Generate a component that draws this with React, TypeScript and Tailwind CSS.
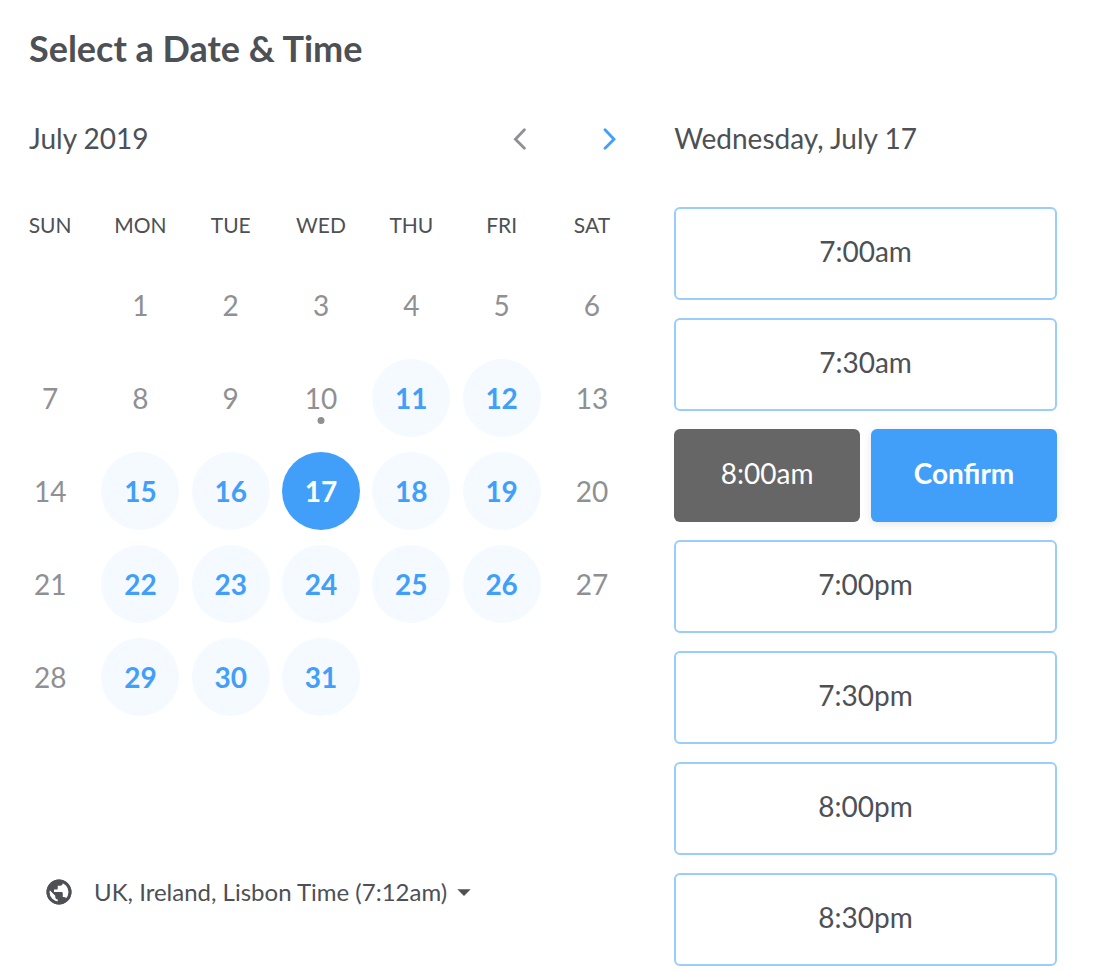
import React, { useState } from "react";
import { MdArrowDropDown } from "react-icons/md";

const WEEKDAYS = ["SUN", "MON", "TUE", "WED", "THU", "FRI", "SAT"];

// null = empty cell outside the month
const WEEKS: (number | null)[][] = [
  [null, 1, 2, 3, 4, 5, 6],
  [7, 8, 9, 10, 11, 12, 13],
  [14, 15, 16, 17, 18, 19, 20],
  [21, 22, 23, 24, 25, 26, 27],
  [28, 29, 30, 31, null, null, null],
];

const AVAILABLE = [11, 12, 15, 16, 17, 18, 19, 22, 23, 24, 25, 26, 29, 30, 31];
const TODAY = 10;

const TIMES = ["7:00am", "7:30am", "8:00am", "7:00pm", "7:30pm", "8:00pm", "8:30pm"];

// Globe with a slightly heavier rim
const GlobeIcon = () => (
  <svg viewBox="0 0 24 24" fill="currentColor" className="size-[30px]" aria-hidden="true">
    <path d="M12 2C6.48 2 2 6.48 2 12s4.48 10 10 10 10-4.48 10-10S17.52 2 12 2zm-1 17.93c-3.95-.49-7-3.85-7-7.93 0-.62.08-1.21.21-1.79L9 15v1c0 1.1.9 2 2 2v1.93zm6.9-2.54c-.26-.81-1-1.39-1.9-1.39h-1v-3c0-.55-.45-1-1-1H8v-2h2c.55 0 1-.45 1-1V7h2c1.1 0 2-.9 2-2v-.41c2.93 1.19 5 4.06 5 7.41 0 2.08-.8 3.97-2.1 5.39z" />
    <circle cx="12" cy="12" r="8.8" fill="none" stroke="currentColor" strokeWidth="2.4" />
  </svg>
);

interface DayProps {
  day: number;
  selected: boolean;
  onSelect: (day: number) => void;
}

const Day: React.FC<DayProps> = ({ day, selected, onSelect }) => {
  const available = AVAILABLE.includes(day);

  let style = "text-[#8f9094]";
  if (available) style = "bg-[#f4faff] font-bold text-[#419ff9]";
  if (selected) style = "bg-[#419ff9] font-bold text-white";

  return (
    <button
      type="button"
      disabled={!available}
      onClick={() => onSelect(day)}
      className={`relative mx-auto flex size-[78px] items-center justify-center rounded-full ${style}`}
    >
      {day}
      {day === TODAY && (
        <span className="absolute bottom-[13px] left-1/2 size-[7px] -translate-x-1/2 rounded-full bg-[#8f9094]" />
      )}
    </button>
  );
};

interface TimeSlotProps {
  time: string;
  selected: boolean;
  onSelect: (time: string) => void;
}

const TimeSlot: React.FC<TimeSlotProps> = ({ time, selected, onSelect }) => {
  if (selected) {
    return (
      <li className="flex gap-[11px]">
        <button type="button" className="h-[93px] flex-1 rounded-md bg-[#666666] pb-1.5 text-white">
          {time}
        </button>
        <button
          type="button"
          className="h-[93px] flex-1 rounded-md bg-[#419ff9] pb-1.5 font-bold text-white shadow-[0_2px_10px_rgba(0,0,0,0.1)]"
        >
          Confirm
        </button>
      </li>
    );
  }

  return (
    <li>
      <button
        type="button"
        onClick={() => onSelect(time)}
        className="h-[93px] w-full rounded-md border-2 border-[#9bcdfb] pb-1.5"
      >
        {time}
      </button>
    </li>
  );
};

const App: React.FC = () => {
  const [day, setDay] = useState(17);
  const [time, setTime] = useState("8:00am");

  const weekday = new Date(2019, 6, day).toLocaleDateString("en-US", { weekday: "long" });

  return (
    <main className="bg-white pt-[27px] pr-[43px] pl-[5px] font-['Lato',sans-serif] text-[28px] text-[#4d5055]">
      <h1 className="pl-6 text-4xl leading-[42px] font-bold">Select a Date &amp; Time</h1>

      <div className="mt-[49px] grid grid-cols-[53fr_32fr] gap-[35px]">
        <section>
          <div className="flex h-10 items-center pl-6">
            <h2 className="flex-1">July 2019</h2>
            <button type="button" aria-label="Previous month" className="flex w-[90px] justify-center text-[#8f9094]">
              <svg width="14" height="24" viewBox="0 0 14 24" fill="none" stroke="currentColor" strokeWidth="2.8" strokeLinecap="round">
                <path d="M11.4 3.8 2.4 13.2l9 9" />
              </svg>
            </button>
            <button type="button" aria-label="Next month" className="mr-[-16px] flex w-[90px] justify-center text-[#419ff9]">
              <svg width="14" height="24" viewBox="0 0 14 24" fill="none" stroke="currentColor" strokeWidth="2.8" strokeLinecap="round">
                <path d="M2 3.8 11 13.2l-9 9" />
              </svg>
            </button>
          </div>

          <div className="mt-[50px] min-h-[608px] pr-0.5">
            <table className="w-full table-fixed">
              <thead>
                <tr>
                  {WEEKDAYS.map((name) => (
                    <th key={name} scope="col" className="pb-4 text-[21px] leading-[34px] font-normal">
                      {name}
                    </th>
                  ))}
                </tr>
              </thead>
              <tbody>
                {WEEKS.map((week, i) => (
                  <tr key={i} className="h-[93px]">
                    {week.map((d, j) => (
                      <td key={j} className="p-0">
                        {d && <Day day={d} selected={d === day} onSelect={setDay} />}
                      </td>
                    ))}
                  </tr>
                ))}
              </tbody>
            </table>
          </div>

          <div className="mt-15 flex items-center pl-[39px]">
            <GlobeIcon />
            <div className="relative ml-5">
              <select
                aria-label="Time zone"
                className="block appearance-none bg-transparent pr-8 text-2xl leading-8"
              >
                <option>UK, Ireland, Lisbon Time (7:12am)</option>
              </select>
              <MdArrowDropDown className="pointer-events-none absolute top-0 right-0 size-8" />
            </div>
          </div>
        </section>

        <section>
          <h2 className="h-10 leading-10">
            {weekday}, July {day}
          </h2>
          <ul className="mt-[49px] flex flex-col gap-[18px]">
            {TIMES.map((t) => (
              <TimeSlot key={t} time={t} selected={t === time} onSelect={setTime} />
            ))}
          </ul>
        </section>
      </div>
    </main>
  );
};

export default App;
